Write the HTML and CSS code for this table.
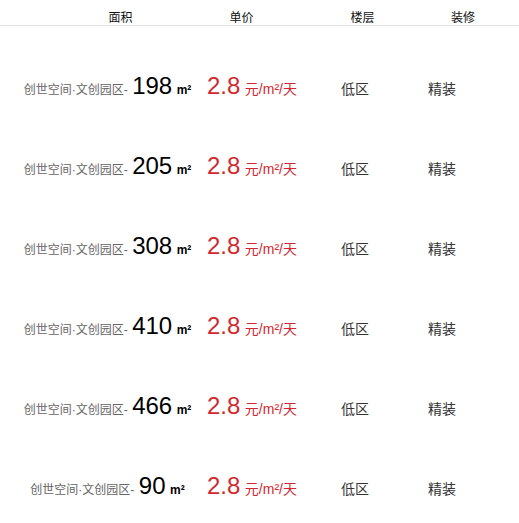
FILE: index.html
```html
<!DOCTYPE html>
<html lang="zh-CN">
<head>
<meta charset="utf-8">
<title>房源列表</title>
<link rel="stylesheet" href="styles.css">
</head>
<body>
<div class="list">
  <div class="head">
    <div class="hc">面积</div>
    <div class="hc">单价</div>
    <div class="hc">楼层</div>
    <div class="hc">装修</div>
  </div>
  <div class="rows">
    <div class="row">
      <div class="c-area"><span class="name">创世空间·文创园区-</span> <span class="num">198</span> <span class="unit">m²</span></div>
      <div class="c-price"><span class="price">2.8</span> <span class="punit">元/m²/天</span></div>
      <div class="c-floor">低区</div>
      <div class="c-deco">精装</div>
    </div>
    <div class="row">
      <div class="c-area"><span class="name">创世空间·文创园区-</span> <span class="num">205</span> <span class="unit">m²</span></div>
      <div class="c-price"><span class="price">2.8</span> <span class="punit">元/m²/天</span></div>
      <div class="c-floor">低区</div>
      <div class="c-deco">精装</div>
    </div>
    <div class="row">
      <div class="c-area"><span class="name">创世空间·文创园区-</span> <span class="num">308</span> <span class="unit">m²</span></div>
      <div class="c-price"><span class="price">2.8</span> <span class="punit">元/m²/天</span></div>
      <div class="c-floor">低区</div>
      <div class="c-deco">精装</div>
    </div>
    <div class="row">
      <div class="c-area"><span class="name">创世空间·文创园区-</span> <span class="num">410</span> <span class="unit">m²</span></div>
      <div class="c-price"><span class="price">2.8</span> <span class="punit">元/m²/天</span></div>
      <div class="c-floor">低区</div>
      <div class="c-deco">精装</div>
    </div>
    <div class="row">
      <div class="c-area"><span class="name">创世空间·文创园区-</span> <span class="num">466</span> <span class="unit">m²</span></div>
      <div class="c-price"><span class="price">2.8</span> <span class="punit">元/m²/天</span></div>
      <div class="c-floor">低区</div>
      <div class="c-deco">精装</div>
    </div>
    <div class="row">
      <div class="c-area"><span class="name">创世空间·文创园区-</span> <span class="num">90</span> <span class="unit">m²</span></div>
      <div class="c-price"><span class="price">2.8</span> <span class="punit">元/m²/天</span></div>
      <div class="c-floor">低区</div>
      <div class="c-deco">精装</div>
    </div>
  </div>
</div>
</body>
</html>
```

FILE: styles.css
```css
html, body {
  margin: 0;
  padding: 0;
  background: #fff;
}
body {
  font-family: "Liberation Sans", Arial, "Noto Sans CJK SC", sans-serif;
  color: #333;
}
.list {
  width: 519px;
}
.head {
  display: grid;
  grid-template-columns: 121px 121px 121px 80px;
  padding-left: 60px;
  height: 26px;
  box-sizing: border-box;
  padding-top: 10px;
  border-bottom: 1px solid #e3e3e3;
  font-size: 12px;
  line-height: 16px;
  color: #111;
}
.hc {
  text-align: center;
}
.rows {
  padding-top: 45px;
  display: flex;
  flex-direction: column;
  gap: 50px;
}
.row {
  display: flex;
  align-items: baseline;
  height: 30px;
  line-height: 30px;
  white-space: nowrap;
}
.c-area {
  width: 207px;
  padding-left: 8px;
  box-sizing: border-box;
  text-align: center;
}
.name {
  font-size: 12px;
  color: #666;
}
.num {
  font-size: 24px;
  color: #000;
}
.unit {
  font-size: 12px;
  color: #000;
  font-weight: bold;
}
.c-price {
  width: 110px;
}
.price {
  font-size: 24px;
  color: #d2272e;
}
.punit {
  font-size: 14px;
  color: #d2272e;
}
.c-floor {
  width: 76px;
  text-align: center;
  font-size: 14px;
  color: #333;
}
.c-deco {
  width: 98px;
  text-align: center;
  font-size: 14px;
  color: #333;
}
```
